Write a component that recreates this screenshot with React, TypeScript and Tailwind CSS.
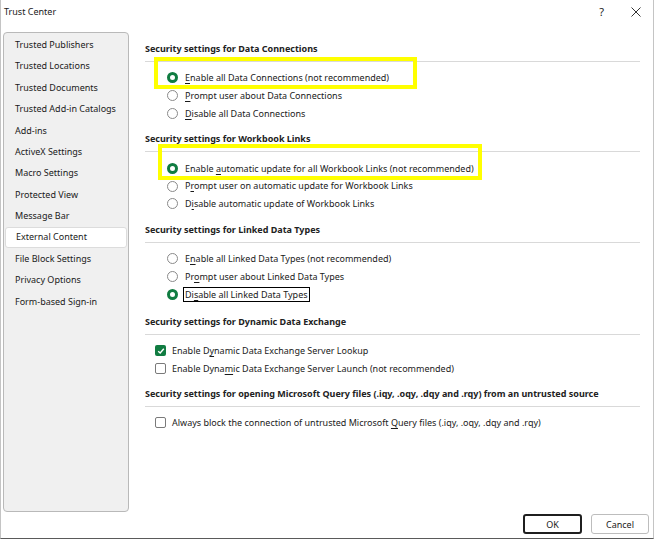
import React from "react";

// Trust Center 대화상자 – External Content 페이지.

const SIDEBAR = [
  "Trusted Publishers",
  "Trusted Locations",
  "Trusted Documents",
  "Trusted Add-in Catalogs",
  "Add-ins",
  "ActiveX Settings",
  "Macro Settings",
  "Protected View",
  "Message Bar",
  "External Content",
  "File Block Settings",
  "Privacy Options",
  "Form-based Sign-in",
];

// label: [앞, 밑줄 글자, 뒤]
type Label = [string, string, string];

function Text({ label }: { label: Label }) {
  return (
    <span className="whitespace-nowrap">
      {label[0]}
      <span className="underline underline-offset-[2px]">{label[1]}</span>
      {label[2]}
    </span>
  );
}

function Radio({ label, checked, focus }: { label: Label; checked?: boolean; focus?: boolean }) {
  return (
    <div className="h-[17.8px] flex items-center pl-[22px] gap-[7px]">
      {checked ? (
        <span className="w-[11px] h-[11px] rounded-full border-[3px] border-[#107c41] bg-white shrink-0" />
      ) : (
        <span className="w-[11px] h-[11px] rounded-full border border-[#8a8a8a] bg-white shrink-0" />
      )}
      <span className={focus ? "border border-black px-[1px] -ml-[2px] leading-[13px]" : ""}>
        <Text label={label} />
      </span>
    </div>
  );
}

function Check({ label, checked }: { label: Label; checked?: boolean }) {
  return (
    <div className="h-[17.5px] flex items-center pl-[10px] gap-[6px]">
      {checked ? (
        <span className="w-[11px] h-[11px] rounded-[2px] bg-[#107c41] flex items-center justify-center shrink-0">
          <svg width="8" height="8" viewBox="0 0 8 8" fill="none">
            <path d="M1.2 4.2 3.2 6 6.8 1.8" stroke="white" strokeWidth="1.4" />
          </svg>
        </span>
      ) : (
        <span className="w-[11px] h-[11px] rounded-[2px] border border-[#7a7a7a] bg-white shrink-0" />
      )}
      <Text label={label} />
    </div>
  );
}

function Section({ title, children, last }: { title: string; children: React.ReactNode; last?: boolean }) {
  return (
    <div className={last ? "mb-[11px]" : "mb-[9px]"}>
      <div className="h-4 leading-4 font-bold text-[#222] whitespace-nowrap">{title}</div>
      <div className="mt-[4px] h-px bg-[#d9d9d9]" />
      <div className="pt-[7px]">{children}</div>
    </div>
  );
}

export default function App() {
  return (
    <div className="relative w-[654px] h-[539px] bg-white flex flex-col border-x border-b border-x-[#c4c4c4] border-b-[#5a5a5a] font-['Noto_Sans',sans-serif] text-[9px] text-[#1a1a1a]">
      <div className="h-[32px] flex items-start justify-between pt-[5px] pl-[3px] pr-[12px]">
        <span className="leading-[14px]">Trust Center</span>
        <div className="flex items-center gap-[27px] leading-[14px]">
          <span className="text-[11px]">?</span>
          <svg width="10" height="10" viewBox="0 0 10 10">
            <path d="M0.5 0.5 9.5 9.5M9.5 0.5 0.5 9.5" stroke="#333" strokeWidth="1" />
          </svg>
        </div>
      </div>

      <div className="flex h-[480px]">
        <nav className="ml-[2px] w-[126px] h-[480px] rounded-[4px] border border-[#b9b9b9] bg-[#f0f0f0] pt-px">
          {SIDEBAR.map((item) => (
            <div
              key={item}
              className={
                item === "External Content"
                  ? "h-[21.4px] flex items-center pl-[10px] mx-px bg-white border border-[#dcdcdc] rounded-[3px]"
                  : "h-[21.4px] flex items-center pl-[11px]"
              }
            >
              {item}
            </div>
          ))}
        </nav>

        <div className="flex-1 pl-[16px] pr-[13px] pt-[9px]">
          <Section title="Security settings for Data Connections">
            <Radio checked label={["", "E", "nable all Data Connections (not recommended)"]} />
            <Radio label={["", "P", "rompt user about Data Connections"]} />
            <Radio label={["", "D", "isable all Data Connections"]} />
          </Section>
          <Section title="Security settings for Workbook Links">
            <Radio checked label={["Enable ", "a", "utomatic update for all Workbook Links (not recommended)"]} />
            <Radio label={["P", "r", "ompt user on automatic update for Workbook Links"]} />
            <Radio label={["D", "i", "sable automatic update of Workbook Links"]} />
          </Section>
          <Section title="Security settings for Linked Data Types" last>
            <Radio label={["E", "n", "able all Linked Data Types (not recommended)"]} />
            <Radio label={["Pr", "o", "mpt user about Linked Data Types"]} />
            <Radio checked focus label={["Di", "s", "able all Linked Data Types"]} />
          </Section>
          <Section title="Security settings for Dynamic Data Exchange">
            <Check checked label={["Enable D", "y", "namic Data Exchange Server Lookup"]} />
            <Check label={["Enable Dyna", "m", "ic Data Exchange Server Launch (not recommended)"]} />
          </Section>
          <Section title="Security settings for opening  Microsoft Query files (.iqy, .oqy, .dqy and .rqy) from an untrusted source">
            <Check label={["Always block the connection of untrusted Microsoft ", "Q", "uery files (.iqy, .oqy, .dqy and .rqy)"]} />
          </Section>
        </div>
      </div>

      <div className="flex justify-end gap-[9px] pt-[2px] pr-[4px]">
        <button className="w-[59px] h-[20px] rounded-[3px] border-2 border-[#1f1f1f] bg-white leading-none">OK</button>
        <button className="w-[58px] h-[20px] rounded-[3px] border border-[#bdbdbd] bg-white leading-none">Cancel</button>
      </div>

      {/* 노란 강조 박스 (스크린샷 위 주석) */}
      <div className="absolute left-[153px] top-[57px] w-[263px] h-[32px] border-4 border-[#ffff00]" />
      <div className="absolute left-[157px] top-[144px] w-[324px] h-[36px] border-4 border-[#ffff00]" />
    </div>
  );
}
